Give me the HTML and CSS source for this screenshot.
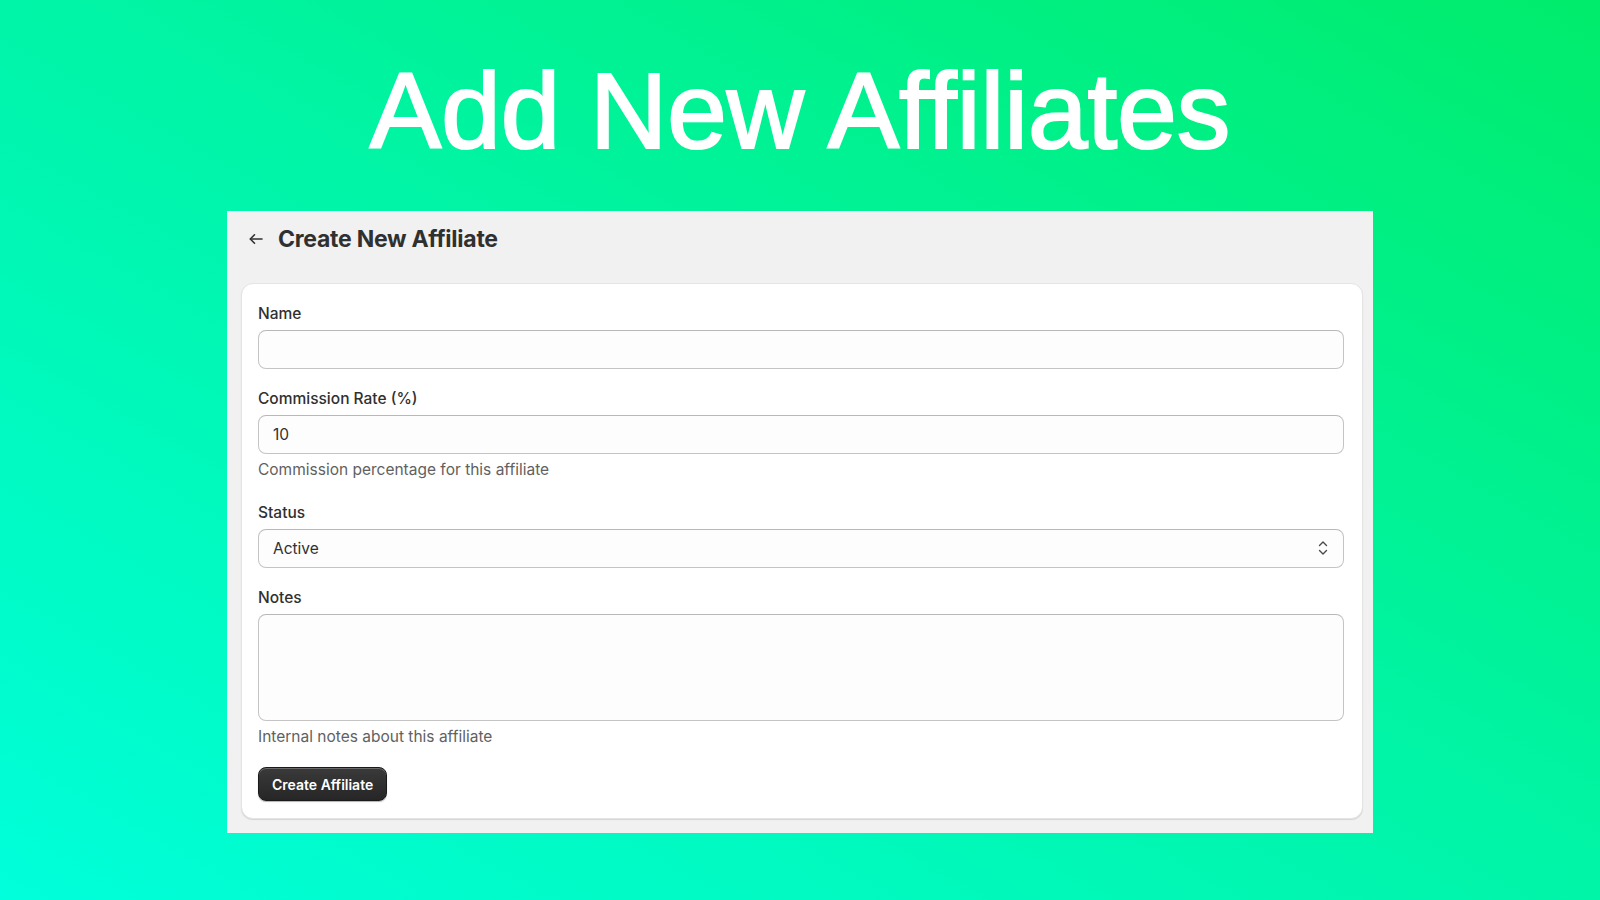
FILE: index.html
```html
<!DOCTYPE html>
<html lang="en">
<head>
    <meta charset="UTF-8">
    <meta name="viewport" content="width=device-width, initial-scale=1.0">
    <title>Add New Affiliates</title>
    <link rel="stylesheet" href="styles.css">
</head>
<body>

    <div class="page">
        <h1 class="hero">Add New Affiliates</h1>

        <div class="panel">
            <div class="panel-head">
                <button class="back" aria-label="Back">
                    <svg width="16" height="16" viewBox="0 0 16 16" fill="none" stroke="#303030" stroke-width="1.6" stroke-linecap="round" stroke-linejoin="round">
                        <path d="M14 8H2.5"/>
                        <path d="M6.5 3.8L2.3 8l4.2 4.2"/>
                    </svg>
                </button>
                <h2>Create New Affiliate</h2>
            </div>

            <form class="card" id="affiliateForm">
                <div class="field">
                    <label for="name">Name</label>
                    <input type="text" id="name">
                </div>

                <div class="field with-hint">
                    <label for="rate">Commission Rate (%)</label>
                    <input type="text" id="rate" value="10">
                    <div class="hint">Commission percentage for this affiliate</div>
                </div>

                <div class="field">
                    <label for="status">Status</label>
                    <div class="select-wrap">
                        <select id="status">
                            <option value="active">Active</option>
                            <option value="inactive">Inactive</option>
                        </select>
                        <svg class="chevrons" width="10" height="16" viewBox="0 0 10 16" fill="none" stroke="#4a4a4a" stroke-width="1.4" stroke-linecap="round" stroke-linejoin="round">
                            <path d="M1.5 5.5L5 2l3.5 3.5"/>
                            <path d="M1.5 10.5L5 14l3.5-3.5"/>
                        </svg>
                    </div>
                </div>

                <div class="field">
                    <label for="notes">Notes</label>
                    <textarea id="notes"></textarea>
                    <div class="hint">Internal notes about this affiliate</div>
                </div>

                <div class="actions">
                    <button type="submit" class="primary">Create Affiliate</button>
                </div>
            </form>
        </div>
    </div>

    <script>
        document.getElementById("affiliateForm").addEventListener("submit", function(event) {
            event.preventDefault(); // no backend here
        });
    </script>
</body>
</html>
```

FILE: styles.css
```css
html, body {
    margin: 0;
    padding: 0;
}
body {
    min-height: 100vh;
    background: linear-gradient(to top right, #00ffdb 0%, #00f5a8 50%, #00ec6c 100%);
    font-family: Inter, "Noto Sans", sans-serif;
    color: #303030;
}
.page {
    display: flex;
    flex-direction: column;
    align-items: center;
    padding-top: 58px;
}
.hero {
    margin: 0;
    font-family: "Liberation Sans", Arial, sans-serif;
    font-weight: 400;
    font-size: 107px;
    line-height: 106px;
    color: #fff;
    -webkit-text-stroke: 2.2px #fff;
}
.panel {
    width: 1146px;
    margin-top: 47px;
    background: #f1f1f1;
    padding: 0 10px 14px 14px;
    box-sizing: border-box;
}
.panel-head {
    display: flex;
    align-items: center;
    gap: 14px;
    height: 72px;
    padding-left: 7px;
    padding-bottom: 17px;
    box-sizing: border-box;
}
.back {
    display: flex;
    padding: 0;
    border: none;
    background: none;
    cursor: pointer;
}
.panel-head h2 {
    margin: 0;
    font-size: 23px;
    font-weight: 700;
    letter-spacing: -0.25px;
    color: #303030;
}
.card {
    display: flex;
    flex-direction: column;
    gap: 20px;
    background: #fff;
    border: 1px solid #e4e4e4;
    border-radius: 12px;
    box-shadow: 0 1px 1px rgba(0,0,0,0.12);
    padding: 20px 18px 17px 16px;
}
.field {
    display: flex;
    flex-direction: column;
}
.with-hint {
    margin-bottom: 3px;
}
.field label {
    font-size: 15.5px;
    line-height: 20px;
    font-weight: 450;
    color: #303030;
    margin-bottom: 6px;
}
.field input, .field select, .field textarea {
    width: 100%;
    box-sizing: border-box;
    height: 39px;
    padding: 0 14px;
    font-family: Inter, "Noto Sans", sans-serif;
    font-size: 15.5px;
    color: #303030;
    background: #fdfdfd;
    border: 1px solid #c4c4c4;
    border-top-color: #b8b8b8;
    border-radius: 8px;
    outline: none;
}
.field textarea {
    height: 107px;
    padding: 10px 14px;
    resize: none;
}
.select-wrap {
    position: relative;
}
.field select {
    appearance: none;
    -webkit-appearance: none;
}
.chevrons {
    position: absolute;
    right: 16px;
    top: 11px;
    pointer-events: none;
}
.hint {
    margin-top: 6px;
    font-size: 15.5px;
    line-height: 20px;
    color: #616161;
}
.actions {
    display: flex;
}
.primary {
    height: 34px;
    padding: 0 13px;
    font-family: Inter, "Noto Sans", sans-serif;
    font-size: 14px;
    font-weight: 600;
    color: #fff;
    background: linear-gradient(#3a3a3a, #262626);
    border: 1px solid #1a1a1a;
    border-radius: 8px;
    box-shadow: inset 0 1px 0 rgba(255,255,255,0.25), 0 1px 1px rgba(0,0,0,0.3);
    cursor: pointer;
}
```
